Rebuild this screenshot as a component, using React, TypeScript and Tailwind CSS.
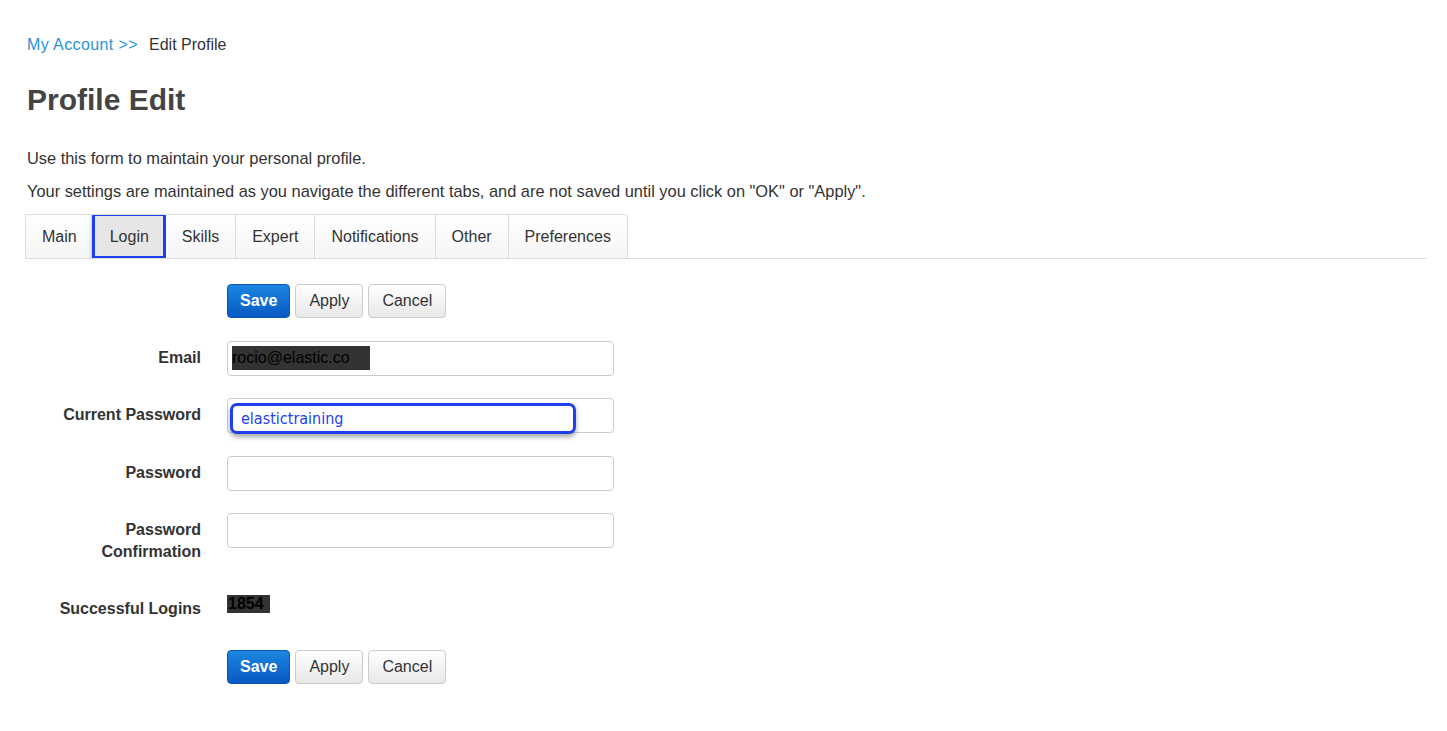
import React from "react";

const tabs = ["Main", "Login", "Skills", "Expert", "Notifications", "Other", "Preferences"];

function Buttons() {
  return (
    <div className="flex gap-[5px]">
      <button className="h-[34px] rounded-[4px] border border-[#0a56b5] bg-gradient-to-b from-[#1c86e0] to-[#0a59c4] px-3 text-[16px] font-bold text-white">
        Save
      </button>
      <button className="h-[34px] rounded-[4px] border border-[#ccc] bg-gradient-to-b from-white to-[#e8e8e8] px-[13px] text-[16px] text-[#333]">
        Apply
      </button>
      <button className="h-[34px] rounded-[4px] border border-[#ccc] bg-gradient-to-b from-white to-[#e8e8e8] px-[13px] text-[16px] text-[#333]">
        Cancel
      </button>
    </div>
  );
}

function Row({ label, children, className = "" }: { label: React.ReactNode; children: React.ReactNode; className?: string }) {
  return (
    <div className={`flex ${className}`}>
      <div className="w-[174px] shrink-0 pt-[6px] text-right text-[16px] font-bold leading-[22px] text-[#333]">{label}</div>
      <div className="ml-[26px]">{children}</div>
    </div>
  );
}

function Input({ children }: { children?: React.ReactNode }) {
  return <div className="relative h-[35px] w-[387px] rounded-[4px] border border-[#ccc] bg-white">{children}</div>;
}

export default function App() {
  return (
    <div className="min-h-screen bg-white pl-[27px] pr-[20px] pt-[34px] text-[#333]" style={{ fontFamily: '"Liberation Sans", Arial, sans-serif' }}>
      <div className="text-[16px] leading-[22px]">
        <a className="text-[#2b94d6] tracking-[0.4px]">My Account &gt;&gt;</a>
        <span className="ml-[11px]">Edit Profile</span>
      </div>
      <h1 className="mt-[26px] text-[30px] font-bold leading-[36px] text-[#444]">Profile Edit</h1>
      <p className="mt-[29px] text-[16.4px] leading-[22px]">Use this form to maintain your personal profile.</p>
      <p className="mt-[11px] text-[16.4px] leading-[22px]">
        Your settings are maintained as you navigate the different tabs, and are not saved until you click on "OK" or "Apply".
      </p>

      <div className="-ml-[2px] mt-[12px] flex border-b border-[#ddd]">
        <div className="flex overflow-hidden rounded-tr-[4px] border border-b-0 border-[#ddd]">
          {tabs.map((t, i) => (
            <div
              key={t}
              className={`relative flex h-[43px] items-center px-4 text-[16px] text-[#333] ${i < tabs.length - 1 ? "border-r border-[#ddd]" : ""} ${
                t === "Login" ? "bg-[#e6e6e6]" : "bg-gradient-to-b from-white to-[#f5f5f5]"
              }`}
            >
              {t}
              {t === "Login" && (
                <div className="absolute -left-[2px] -right-[1px] -top-[2px] -bottom-[1px] border-[3px] border-[#1d3ff0] shadow-[0_2px_4px_rgba(0,0,0,0.3)]" />
              )}
            </div>
          ))}
        </div>
      </div>

      <div className="ml-[200px] mt-[25px]">
        <Buttons />
      </div>

      <Row label="Email" className="mt-[23px]">
        <Input>
          <div className="absolute left-[4px] top-[4px] h-[24px] w-[138px] bg-[#333] text-[16px] leading-[24px] text-black">rocio@elastic.co</div>
        </Input>
      </Row>

      <Row label="Current Password" className="mt-[22px]">
        <Input>
          <div
            className="absolute left-[2px] top-[4px] flex h-[31px] w-[346px] items-center rounded-[7px] border-[3px] border-[#1d3ff0] bg-white pl-[8px] text-[16px] text-[#1d3ff0] shadow-[0_3px_5px_rgba(0,0,0,0.35)]"
            style={{ fontFamily: '"DejaVu Sans Condensed", "DejaVu Sans", cursive' }}
          >
            elastictraining
          </div>
        </Input>
      </Row>

      <Row label="Password" className="mt-[23px]">
        <Input />
      </Row>

      <Row label={<>Password<br />Confirmation</>} className="mt-[22px]">
        <Input />
      </Row>

      <Row label="Successful Logins" className="mt-[29px]">
        <div className="mt-[3px] h-[18px] w-[43px] bg-[#333] pl-[1px] text-[16px] font-bold leading-[18px] text-black">1854</div>
      </Row>

      <div className="ml-[200px] mt-[30px]">
        <Buttons />
      </div>
    </div>
  );
}
